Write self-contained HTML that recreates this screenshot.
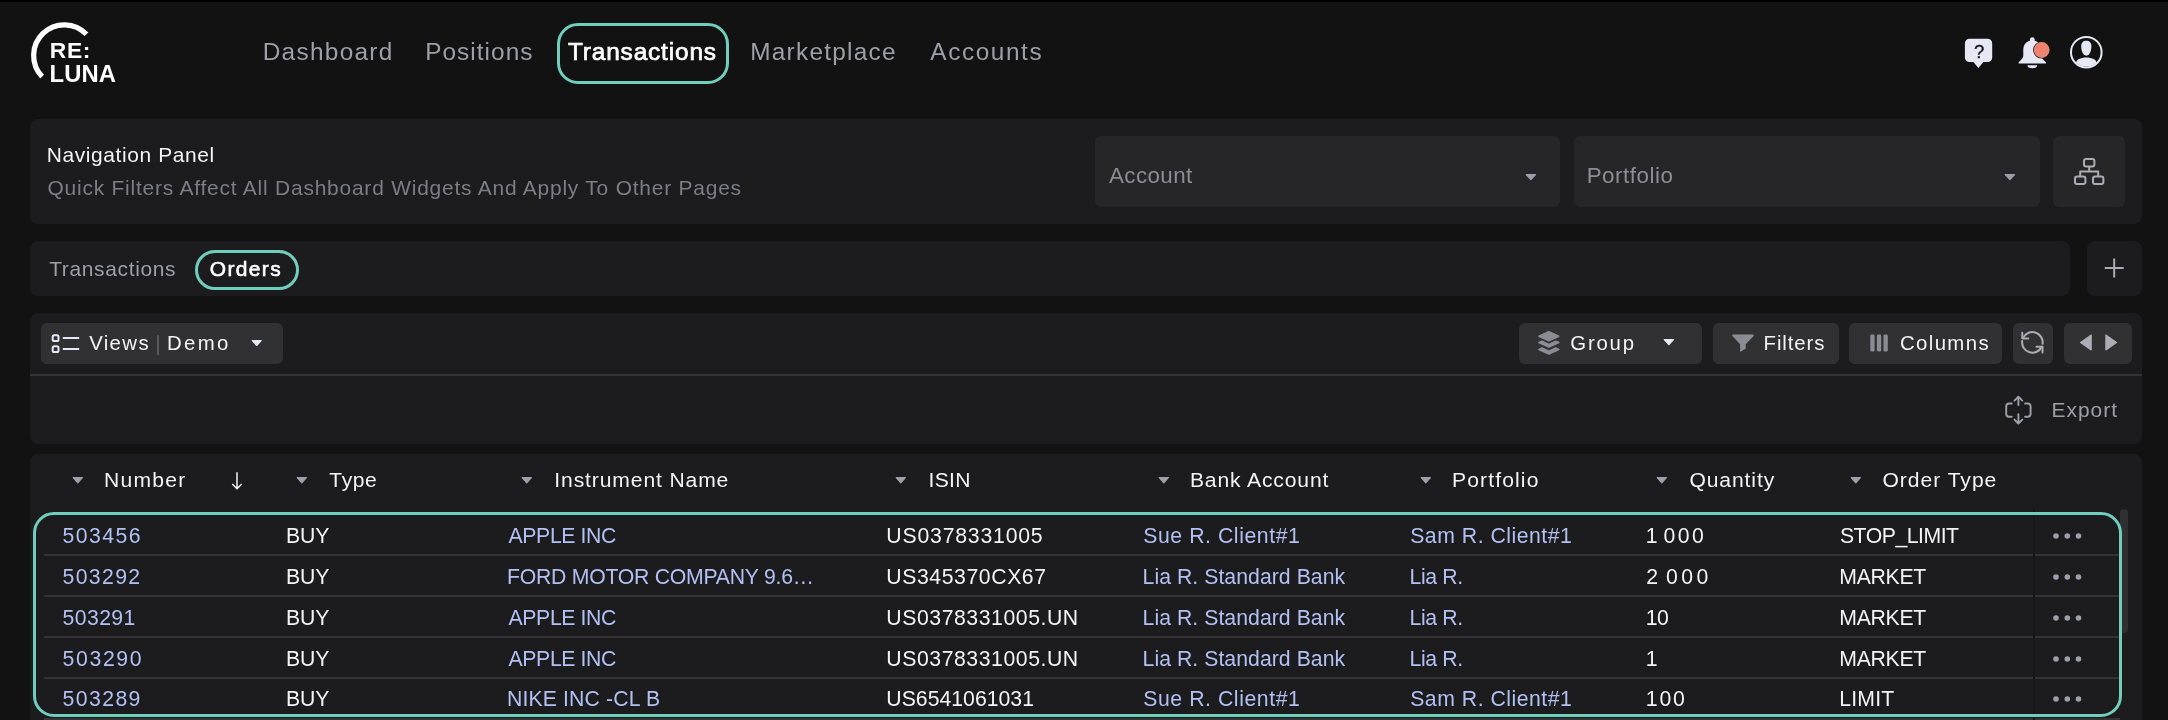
<!DOCTYPE html>
<html lang="en"><head><meta charset="utf-8"><title>RE:LUNA - Orders</title>
<meta name="viewport" content="width=2168">
<style>
*{box-sizing:border-box;margin:0;padding:0}
html,body{width:2168px;height:720px;overflow:hidden;background:#121212}
body{position:relative;font-family:"Liberation Sans",sans-serif;color:#f4f4f8;-webkit-font-smoothing:antialiased}
body *{position:absolute}
main{left:0;top:0;width:2168px;height:720px;will-change:transform}
.t{white-space:nowrap;line-height:1;text-decoration:none;font-weight:400;display:block}
.i{display:block;overflow:visible}
.pill{border:3px solid #6fcfbc}
.hr{background:#333336;height:1.5px}
</style></head><body>
<main>
<div style="left:0;top:0;width:2168px;height:1.600px;background:#000"></div>
<header style="left:0;top:0;width:2168px;height:106px">
<svg class="i" style="left:0px;top:0px" width="130" height="106" viewBox="0 0 130 106" ><path id="arc" d="M86.5 34.3A30.6 30.6 0 1 0 42.1 76.6" fill="none" stroke="#fff" stroke-width="5.2"/></svg>
<span class="t" style="left:49.66px;top:39px;font-size:22.81px;letter-spacing:0.761px;color:#ffffff;font-weight:700">RE:</span>
<span class="t" style="left:49.54px;top:62px;font-size:23.82px;letter-spacing:0.052px;color:#ffffff;font-weight:700">LUNA</span>
<nav style="left:0;top:0;width:0;height:0">
<div class="pill" style="left:557px;top:23px;width:172px;height:61px;border-radius:21px"></div>
<a class="t" style="left:262.7px;top:40px;font-size:24.39px;letter-spacing:1.297px;color:#9e9fa9">Dashboard</a>
<a class="t" style="left:425.2px;top:40px;font-size:24.39px;letter-spacing:1.048px;color:#9e9fa9">Positions</a>
<a class="t" style="left:567.93px;top:40px;font-size:24.39px;letter-spacing:0.863px;color:#ffffff;-webkit-text-stroke:0.7px #ffffff">Transactions</a>
<a class="t" style="left:750.2px;top:40px;font-size:24.39px;letter-spacing:1.263px;color:#9e9fa9">Marketplace</a>
<a class="t" style="left:930.37px;top:40px;font-size:24.39px;letter-spacing:1.57px;color:#9e9fa9">Accounts</a>
</nav>
<svg class="i" style="left:1960px;top:34px" width="40" height="40" viewBox="0 0 40 40" ><path d="M9.6 4.7H27.500a4.700 4.700 0 0 1 4.700 4.700V23.400a4.700 4.700 0 0 1-4.700 4.700H23.400L18.400 33.900 13.400 28.100H9.600a4.700 4.700 0 0 1-4.700-4.700V9.400a4.700 4.700 0 0 1 4.700-4.700Z" fill="#e6e8f5"/></svg>
<span class="t" style="left:1973.88px;top:43px;font-size:18.51px;letter-spacing:0px;color:#121212;-webkit-text-stroke:0.3px #121212">?</span>
<svg class="i" style="left:2014px;top:32px" width="44" height="40" viewBox="0 0 44 40" ><path d="M18.3 5.2a2.4 2.4 0 0 1 2.4 2.4v1.1c4.3 1 6.6 4.6 6.6 9.3v5.5c0 2.2 1.3 3.9 4.7 6.7v1.4H4.6v-1.4c3.4-2.8 4.7-4.5 4.7-6.700V18c0-4.700 2.300-8.300 6.600-9.300V7.600a2.400 2.400 0 0 1 2.400-2.400Z" fill="#e6e8f5"/><path d="M13.4 33.2h9.8a4.9 3 0 0 1-9.8 0Z" fill="#e6e8f5"/><circle cx="27.7" cy="18" r="8.6" fill="#121212"/><circle cx="27.7" cy="18" r="7.9" fill="#ee836f"/></svg>
<svg class="i" style="left:2066px;top:32px" width="40" height="40" viewBox="0 0 40 40" ><defs><clipPath id="uc"><circle cx="20.3" cy="20.2" r="14.4"/></clipPath></defs><circle cx="20.3" cy="20.2" r="15.3" fill="none" stroke="#e6e8f5" stroke-width="2"/><g clip-path="url(#uc)" fill="#e6e8f5"><path d="M20.3 8.800c3.200 0 5.100 2 5.100 5.300 0 4-1.300 9.600-5.100 9.600s-5.100-5.600-5.100-9.600c0-3.300 1.900-5.300 5.100-5.300Z"/><path d="M10 36v-5c0-3.400 4.600-5.600 10.300-5.600s10.300 2.200 10.300 5.600V36Z"/></g></svg>
</header>
<section style="left:0;top:0;width:0;height:0">
<div style="left:30px;top:119px;width:2112px;height:105px;background:#1c1c1e;border-radius:8px"></div>
<h2 class="t" style="left:46.76px;top:145px;font-size:20.95px;letter-spacing:0.612px;color:#f4f4f8">Navigation Panel</h2>
<p class="t" style="left:47.49px;top:178px;font-size:20.95px;letter-spacing:0.787px;color:#7d7d85">Quick Filters Affect All Dashboard Widgets And Apply To Other Pages</p>
<div style="left:1095px;top:136px;width:465px;height:71px;background:#262628;border-radius:6px"></div>
<span class="t" style="left:1108.96px;top:165px;font-size:22.38px;letter-spacing:0.406px;color:#8d8d94">Account</span>
<svg class="i" style="left:1525.3px;top:174px" width="11.8" height="6.4" viewBox="0 0 11.8 6.4" ><path d="M1.2 0.6H10.600000000000001L5.9 5.7Z" fill="#9e9fa9" stroke="#9e9fa9" stroke-width="1.2" stroke-linejoin="round"/></svg>
<div style="left:1574.3px;top:136px;width:466px;height:71px;background:#262628;border-radius:6px"></div>
<span class="t" style="left:1586.65px;top:165px;font-size:22.38px;letter-spacing:0.536px;color:#8d8d94">Portfolio</span>
<svg class="i" style="left:2004.3px;top:174px" width="11.8" height="6.4" viewBox="0 0 11.8 6.4" ><path d="M1.2 0.6H10.600000000000001L5.9 5.7Z" fill="#9e9fa9" stroke="#9e9fa9" stroke-width="1.2" stroke-linejoin="round"/></svg>
<div style="left:2053px;top:136px;width:72px;height:71px;background:#262628;border-radius:6px"></div>
<svg class="i" style="left:2070px;top:154px" width="40" height="36" viewBox="0 0 40 36" ><g fill="none" stroke="#acacb4" stroke-width="2" stroke-linejoin="round"><rect x="14" y="5" width="10.4" height="7.6" rx="2"/><rect x="5" y="22.400" width="10.4" height="7.6" rx="2"/><rect x="23" y="22.400" width="10.4" height="7.6" rx="2"/><path d="M19.200 12.600V17.500M10.200 22.400V17.500H28.200V22.400"/></g></svg>
</section>
<section style="left:0;top:0;width:0;height:0">
<div style="left:30px;top:241px;width:2040px;height:55px;background:#1c1c1e;border-radius:8px"></div>
<a class="t" style="left:49.15px;top:259px;font-size:20.95px;letter-spacing:0.669px;color:#9e9fa9">Transactions</a>
<div class="pill" style="left:195px;top:250px;width:104px;height:40px;border-radius:20px"></div>
<a class="t" style="left:209.74px;top:259px;font-size:20.95px;letter-spacing:1.388px;color:#ffffff;-webkit-text-stroke:0.6px #ffffff">Orders</a>
<div style="left:2087px;top:241px;width:55px;height:55px;background:#1c1c1e;border-radius:8px"></div>
<svg class="i" style="left:2100px;top:254px" width="28" height="28" viewBox="0 0 28 28" ><path d="M14.200 4.500V23.500M4.700 14H23.700" fill="none" stroke="#acacb4" stroke-width="2"/></svg>
</section>
<section style="left:0;top:0;width:0;height:0">
<div style="left:30px;top:313px;width:2112px;height:131px;background:#1c1c1e;border-radius:8px"></div>
<div class="hr" style="left:30px;top:374.3px;width:2112px"></div>
<div style="left:41px;top:323px;width:242px;height:41px;background:#313134;border-radius:6px"></div>
<svg class="i" style="left:48px;top:330px" width="36" height="28" viewBox="0 0 36 28" ><g fill="none" stroke="#e6e8f5" stroke-width="2"><rect x="4.700" y="5.200" width="5.800" height="5.800" rx="1.6"/><rect x="4.700" y="16.200" width="5.800" height="5.800" rx="1.6"/><path d="M14.800 8.100H31.200M14.800 18.900H31.200"/></g></svg>
<span class="t" style="left:89.13px;top:333px;font-size:20.37px;letter-spacing:1.374px;color:#f4f4f8">Views</span>
<div style="left:157.300px;top:335px;width:1.5px;height:20px;background:#58585e"></div>
<span class="t" style="left:167.12px;top:333px;font-size:20.37px;letter-spacing:2.308px;color:#f4f4f8">Demo</span>
<svg class="i" style="left:250.8px;top:339.5px" width="11.4" height="6.2" viewBox="0 0 11.4 6.2" ><path d="M1.2 0.6H10.200000000000001L5.7 5.5Z" fill="#e6e8f5" stroke="#e6e8f5" stroke-width="1.2" stroke-linejoin="round"/></svg>
<div style="left:1519.2px;top:323px;width:183px;height:41px;background:#313134;border-radius:6px"></div>
<svg class="i" style="left:1534px;top:326px" width="30" height="34" viewBox="0 0 30 34" ><g fill="#8b8b93" stroke="#8b8b93" stroke-width="1.6" stroke-linejoin="round"><path d="M14.850 5.700 24.800 10.200 14.850 14.700 4.900 10.200Z"/><path d="M4.900 16.600 7.900 15.300 14.850 18.400 21.800 15.300 24.800 16.600 14.850 21.100Z"/><path d="M4.900 23.400 7.900 22.100 14.850 25.200 21.800 22.100 24.800 23.400 14.850 27.900Z"/></g></svg>
<span class="t" style="left:1570.26px;top:333px;font-size:20.37px;letter-spacing:1.799px;color:#f4f4f8">Group</span>
<svg class="i" style="left:1662.6px;top:339.3px" width="11.8" height="6.4" viewBox="0 0 11.8 6.4" ><path d="M1.2 0.6H10.600000000000001L5.9 5.7Z" fill="#e6e8f5" stroke="#e6e8f5" stroke-width="1.2" stroke-linejoin="round"/></svg>
<div style="left:1713px;top:323px;width:126.2px;height:41px;background:#313134;border-radius:6px"></div>
<svg class="i" style="left:1730px;top:332px" width="26" height="22" viewBox="0 0 26 22" ><path d="M3.100 2.400H22.900a0.900 0.900 0 0 1 0.700 1.500L15.700 12.200V16.800L10.900 19.600a0.500 0.500 0 0 1-0.800-0.400V12.200L2.400 3.900a0.900 0.900 0 0 1 0.700-1.500Z" fill="#8b8b93"/></svg>
<span class="t" style="left:1763.52px;top:333px;font-size:20.37px;letter-spacing:0.924px;color:#f4f4f8">Filters</span>
<div style="left:1849px;top:323px;width:153.2px;height:41px;background:#313134;border-radius:6px"></div>
<svg class="i" style="left:1868px;top:332px" width="22" height="22" viewBox="0 0 22 22" ><g fill="#8b8b93"><rect x="2.300" y="2.600" width="4.300" height="17" rx="1.4"/><rect x="8.900" y="2.600" width="4.300" height="17" rx="1.4"/><rect x="15.500" y="2.600" width="4.300" height="17" rx="1.400"/></g></svg>
<span class="t" style="left:1899.96px;top:333px;font-size:20.37px;letter-spacing:1.387px;color:#f4f4f8">Columns</span>
<div style="left:2013px;top:323px;width:40px;height:41px;background:#313134;border-radius:6px"></div>
<svg class="i" style="left:2018px;top:328px" width="30" height="30" viewBox="0 0 30 30" ><g fill="none" stroke="#acacb4" stroke-width="2" stroke-linecap="round" stroke-linejoin="round"><path d="M5.07 10.05A10.3 10.3 0 0 1 24.60 15.83"/><path d="M4.3 4.800V10.400H10.300"/><path d="M23.73 18.75A10.3 10.3 0 0 1 4.20 12.97"/><path d="M24.500 24.400V18.800H18.500"/></g></svg>
<div style="left:2064px;top:323px;width:68.2px;height:41px;background:#313134;border-radius:6px"></div>
<svg class="i" style="left:2076px;top:330px" width="46" height="26" viewBox="0 0 46 26" ><g fill="#acacb4" stroke="#acacb4" stroke-width="1.2" stroke-linejoin="round"><path d="M15.200 5V20L4.600 12.500Z"/><path d="M29.900 5V20L40.500 12.500Z"/></g></svg>
<svg class="i" style="left:2001px;top:392px" width="36" height="36" viewBox="0 0 36 36" ><g fill="none" stroke="#9e9fa9" stroke-width="1.9" stroke-linecap="round" stroke-linejoin="round"><path d="M10.700 11.500H8.200a3 3 0 0 0-3 3V21.700a3 3 0 0 0 3 3H10.700"/><path d="M24.100 11.500H26.600a3 3 0 0 1 3 3V21.700a3 3 0 0 1-3 3H24.100"/><path d="M17.400 13V4.900M13.500 8.600 17.400 4.700 21.300 8.600"/><path d="M17.400 22.300V31.300M13.500 27.600 17.400 31.500 21.300 27.600"/></g></svg>
<span class="t" style="left:2051.46px;top:400px;font-size:20.95px;letter-spacing:0.997px;color:#9e9fa9">Export</span>
</section>
<section style="left:0;top:0;width:0;height:0">
<div style="left:30px;top:454.3px;width:2112px;height:280px;background:#1c1c1e;border-radius:8px"></div>
<svg class="i" style="left:71.7px;top:477px" width="11.6" height="6.6" viewBox="0 0 11.6 6.6" ><path d="M1.2 0.6H10.4L5.8 5.8999999999999995Z" fill="#9e9fa9" stroke="#9e9fa9" stroke-width="1.2" stroke-linejoin="round"/></svg>
<span class="t" style="left:104.05px;top:469px;font-size:21.09px;letter-spacing:1.23px;color:#f4f4f8">Number</span>
<svg class="i" style="left:295.5px;top:477px" width="11.6" height="6.6" viewBox="0 0 11.6 6.6" ><path d="M1.2 0.6H10.4L5.8 5.8999999999999995Z" fill="#9e9fa9" stroke="#9e9fa9" stroke-width="1.2" stroke-linejoin="round"/></svg>
<span class="t" style="left:329.35px;top:469px;font-size:21.09px;letter-spacing:0.577px;color:#f4f4f8">Type</span>
<svg class="i" style="left:521.3px;top:477px" width="11.6" height="6.6" viewBox="0 0 11.6 6.6" ><path d="M1.2 0.6H10.4L5.8 5.8999999999999995Z" fill="#9e9fa9" stroke="#9e9fa9" stroke-width="1.2" stroke-linejoin="round"/></svg>
<span class="t" style="left:554.35px;top:469px;font-size:21.09px;letter-spacing:0.88px;color:#f4f4f8">Instrument Name</span>
<svg class="i" style="left:895px;top:477px" width="11.6" height="6.6" viewBox="0 0 11.6 6.6" ><path d="M1.2 0.6H10.4L5.8 5.8999999999999995Z" fill="#9e9fa9" stroke="#9e9fa9" stroke-width="1.2" stroke-linejoin="round"/></svg>
<span class="t" style="left:928.55px;top:469px;font-size:21.09px;letter-spacing:0.331px;color:#f4f4f8">ISIN</span>
<svg class="i" style="left:1158px;top:477px" width="11.6" height="6.6" viewBox="0 0 11.6 6.6" ><path d="M1.2 0.6H10.4L5.8 5.8999999999999995Z" fill="#9e9fa9" stroke="#9e9fa9" stroke-width="1.2" stroke-linejoin="round"/></svg>
<span class="t" style="left:1189.95px;top:469px;font-size:21.09px;letter-spacing:0.862px;color:#f4f4f8">Bank Account</span>
<svg class="i" style="left:1419.5px;top:477px" width="11.6" height="6.6" viewBox="0 0 11.6 6.6" ><path d="M1.2 0.6H10.4L5.8 5.8999999999999995Z" fill="#9e9fa9" stroke="#9e9fa9" stroke-width="1.2" stroke-linejoin="round"/></svg>
<span class="t" style="left:1451.95px;top:469px;font-size:21.09px;letter-spacing:1.136px;color:#f4f4f8">Portfolio</span>
<svg class="i" style="left:1655.5px;top:477px" width="11.6" height="6.6" viewBox="0 0 11.6 6.6" ><path d="M1.2 0.6H10.4L5.8 5.8999999999999995Z" fill="#9e9fa9" stroke="#9e9fa9" stroke-width="1.2" stroke-linejoin="round"/></svg>
<span class="t" style="left:1689.48px;top:469px;font-size:21.09px;letter-spacing:0.888px;color:#f4f4f8">Quantity</span>
<svg class="i" style="left:1849.8px;top:477px" width="11.6" height="6.6" viewBox="0 0 11.6 6.6" ><path d="M1.2 0.6H10.4L5.8 5.8999999999999995Z" fill="#9e9fa9" stroke="#9e9fa9" stroke-width="1.2" stroke-linejoin="round"/></svg>
<span class="t" style="left:1882.48px;top:469px;font-size:21.09px;letter-spacing:0.976px;color:#f4f4f8">Order Type</span>
<svg class="i" style="left:228px;top:468px" width="20" height="26" viewBox="0 0 20 26" ><path d="M9 4.200V20.600M4.300 16 9 20.800 13.700 16" fill="none" stroke="#f4f4f8" stroke-width="1.500"/></svg>
<div class="hr" style="left:44px;top:554.3px;width:2076px;height:2px"></div>
<div class="hr" style="left:44px;top:595.1px;width:2076px;height:2px"></div>
<div class="hr" style="left:44px;top:636.0px;width:2076px;height:2px"></div>
<div class="hr" style="left:44px;top:676.9px;width:2076px;height:2px"></div>
<div class="hr" style="left:44px;top:717.7px;width:2076px;height:2px"></div>
<div style="left:2032.500px;top:507px;width:2px;height:213px;background:#17171a"></div>
<a class="t" style="left:62.48px;top:525px;font-size:21.23px;letter-spacing:1.465px;color:#b2c0f3">503456</a>
<span class="t" style="left:286.05px;top:525px;font-size:21.23px;letter-spacing:-0.186px;color:#f4f4f8">BUY</span>
<a class="t" style="left:508.57px;top:525px;font-size:21.23px;letter-spacing:-0.378px;color:#b2c0f3">APPLE INC</a>
<span class="t" style="left:886.37px;top:525px;font-size:21.23px;letter-spacing:0.799px;color:#f4f4f8">US0378331005</span>
<a class="t" style="left:1143.21px;top:525px;font-size:21.23px;letter-spacing:0.57px;color:#b2c0f3">Sue R. Client#1</a>
<a class="t" style="left:1410.21px;top:525px;font-size:21.23px;letter-spacing:0.515px;color:#b2c0f3">Sam R. Client#1</a>
<span class="t" style="left:1645.72px;top:525px;font-size:21.23px;letter-spacing:2.521px;color:#f4f4f8;word-spacing:-5px">1 000</span>
<span class="t" style="left:1839.91px;top:525px;font-size:21.23px;letter-spacing:-0.478px;color:#f4f4f8">STOP_LIMIT</span>
<svg class="i" style="left:2050px;top:530.0999999999999px" width="36" height="12" viewBox="0 0 36 12" ><g fill="#9e9fa9"><circle cx="6" cy="6" r="2.800"/><circle cx="17.300" cy="6" r="2.800"/><circle cx="28.500" cy="6" r="2.800"/></g></svg>
<a class="t" style="left:62.48px;top:566px;font-size:21.23px;letter-spacing:1.367px;color:#b2c0f3">503292</a>
<span class="t" style="left:286.05px;top:566px;font-size:21.23px;letter-spacing:-0.186px;color:#f4f4f8">BUY</span>
<a class="t" style="left:506.95px;top:566px;font-size:21.23px;letter-spacing:-0.247px;color:#b2c0f3">FORD MOTOR COMPANY 9.6…</a>
<span class="t" style="left:886.37px;top:566px;font-size:21.23px;letter-spacing:0.575px;color:#f4f4f8">US345370CX67</span>
<a class="t" style="left:1142.55px;top:566px;font-size:21.23px;letter-spacing:0.047px;color:#b2c0f3">Lia R. Standard Bank</a>
<a class="t" style="left:1409.55px;top:566px;font-size:21.23px;letter-spacing:-0.379px;color:#b2c0f3">Lia R.</a>
<span class="t" style="left:1646.27px;top:566px;font-size:21.23px;letter-spacing:3.479px;color:#f4f4f8;word-spacing:-5px">2 000</span>
<span class="t" style="left:1839.25px;top:566px;font-size:21.23px;letter-spacing:-0.285px;color:#f4f4f8">MARKET</span>
<svg class="i" style="left:2050px;top:571.0px" width="36" height="12" viewBox="0 0 36 12" ><g fill="#9e9fa9"><circle cx="6" cy="6" r="2.800"/><circle cx="17.300" cy="6" r="2.800"/><circle cx="28.500" cy="6" r="2.800"/></g></svg>
<a class="t" style="left:62.48px;top:607px;font-size:21.23px;letter-spacing:0.424px;color:#b2c0f3">503291</a>
<span class="t" style="left:286.05px;top:607px;font-size:21.23px;letter-spacing:-0.186px;color:#f4f4f8">BUY</span>
<a class="t" style="left:508.57px;top:607px;font-size:21.23px;letter-spacing:-0.378px;color:#b2c0f3">APPLE INC</a>
<span class="t" style="left:886.37px;top:607px;font-size:21.23px;letter-spacing:0.554px;color:#f4f4f8">US0378331005.UN</span>
<a class="t" style="left:1142.55px;top:607px;font-size:21.23px;letter-spacing:0.047px;color:#b2c0f3">Lia R. Standard Bank</a>
<a class="t" style="left:1409.55px;top:607px;font-size:21.23px;letter-spacing:-0.379px;color:#b2c0f3">Lia R.</a>
<span class="t" style="left:1645.72px;top:607px;font-size:21.23px;letter-spacing:-0.57px;color:#f4f4f8;word-spacing:-5px">10</span>
<span class="t" style="left:1839.25px;top:607px;font-size:21.23px;letter-spacing:-0.285px;color:#f4f4f8">MARKET</span>
<svg class="i" style="left:2050px;top:611.8px" width="36" height="12" viewBox="0 0 36 12" ><g fill="#9e9fa9"><circle cx="6" cy="6" r="2.800"/><circle cx="17.300" cy="6" r="2.800"/><circle cx="28.500" cy="6" r="2.800"/></g></svg>
<a class="t" style="left:62.48px;top:648px;font-size:21.23px;letter-spacing:1.675px;color:#b2c0f3">503290</a>
<span class="t" style="left:286.05px;top:648px;font-size:21.23px;letter-spacing:-0.186px;color:#f4f4f8">BUY</span>
<a class="t" style="left:508.57px;top:648px;font-size:21.23px;letter-spacing:-0.378px;color:#b2c0f3">APPLE INC</a>
<span class="t" style="left:886.37px;top:648px;font-size:21.23px;letter-spacing:0.554px;color:#f4f4f8">US0378331005.UN</span>
<a class="t" style="left:1142.55px;top:648px;font-size:21.23px;letter-spacing:0.047px;color:#b2c0f3">Lia R. Standard Bank</a>
<a class="t" style="left:1409.55px;top:648px;font-size:21.23px;letter-spacing:-0.379px;color:#b2c0f3">Lia R.</a>
<span class="t" style="left:1645.72px;top:648px;font-size:21.23px;letter-spacing:0px;color:#f4f4f8;word-spacing:-5px">1</span>
<span class="t" style="left:1839.25px;top:648px;font-size:21.23px;letter-spacing:-0.285px;color:#f4f4f8">MARKET</span>
<svg class="i" style="left:2050px;top:652.6999999999999px" width="36" height="12" viewBox="0 0 36 12" ><g fill="#9e9fa9"><circle cx="6" cy="6" r="2.800"/><circle cx="17.300" cy="6" r="2.800"/><circle cx="28.500" cy="6" r="2.800"/></g></svg>
<a class="t" style="left:62.48px;top:688px;font-size:21.23px;letter-spacing:1.427px;color:#b2c0f3">503289</a>
<span class="t" style="left:286.05px;top:688px;font-size:21.23px;letter-spacing:-0.186px;color:#f4f4f8">BUY</span>
<a class="t" style="left:506.95px;top:688px;font-size:21.23px;letter-spacing:0.14px;color:#b2c0f3">NIKE INC -CL B</a>
<span class="t" style="left:886.37px;top:688px;font-size:21.23px;letter-spacing:0.008px;color:#f4f4f8">US6541061031</span>
<a class="t" style="left:1143.21px;top:688px;font-size:21.23px;letter-spacing:0.57px;color:#b2c0f3">Sue R. Client#1</a>
<a class="t" style="left:1410.21px;top:688px;font-size:21.23px;letter-spacing:0.515px;color:#b2c0f3">Sam R. Client#1</a>
<span class="t" style="left:1645.72px;top:688px;font-size:21.23px;letter-spacing:1.875px;color:#f4f4f8;word-spacing:-5px">100</span>
<span class="t" style="left:1839.25px;top:688px;font-size:21.23px;letter-spacing:0.181px;color:#f4f4f8">LIMIT</span>
<svg class="i" style="left:2050px;top:693.0999999999999px" width="36" height="12" viewBox="0 0 36 12" ><g fill="#9e9fa9"><circle cx="6" cy="6" r="2.800"/><circle cx="17.300" cy="6" r="2.800"/><circle cx="28.500" cy="6" r="2.800"/></g></svg>
<div style="left:2120px;top:509px;width:8px;height:124px;background:#303033;border-radius:4px"></div>
<div class="pill" style="left:33px;top:512px;width:2088.800px;height:205.200px;border-radius:21px"></div>
</section>
</main>
</body></html>
